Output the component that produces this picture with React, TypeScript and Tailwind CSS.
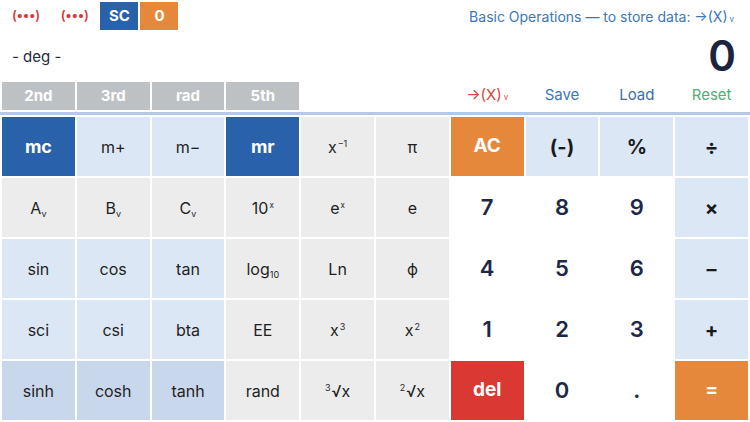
import React from 'react';

type Key = {
  label: React.ReactNode;
  tone: 'dark' | 'light' | 'gray' | 'deep' | 'white' | 'orange' | 'red' | 'op';
};

const TONES: Record<Key['tone'], string> = {
  dark: 'bg-[#2a61ab] text-white font-bold text-[18px]',
  light: 'bg-[#dce7f5] text-[#1f1f1f] text-[16px]',
  gray: 'bg-[#ececec] text-[#1f1f1f] text-[16px]',
  deep: 'bg-[#c9d7ed] text-[#1f1f1f] text-[16px]',
  white: 'bg-white text-[#1c2846] font-semibold text-[22px]',
  orange: 'bg-[#e5883b] text-white font-bold text-[19px]',
  red: 'bg-[#d93833] text-white font-bold text-[19px]',
  op: 'bg-[#dce7f5] text-[#1a1a1a] font-bold text-[20px]',
};

const Sub = ({ base, sub }: { base: string; sub: string }) => (
  <span>
    {base}
    <span className="text-[9px] inline-block translate-y-[3px]">{sub}</span>
  </span>
);

const Sup = ({ base, sup, size = 'text-[9px]' }: { base: string; sup: string; size?: string }) => (
  <span>
    {base}
    <span className={`${size} inline-block -translate-y-[6px] ml-[1px]`}>{sup}</span>
  </span>
);

const Root = ({ n }: { n: string }) => (
  <span>
    <span className="text-[9px] inline-block -translate-y-[6px] mr-[1px]">{n}</span>√x
  </span>
);

const KEYS: Key[] = [
  { label: 'mc', tone: 'dark' },
  { label: 'm+', tone: 'light' },
  { label: 'm−', tone: 'light' },
  { label: 'mr', tone: 'dark' },
  { label: <Sup base="x" sup="−1" />, tone: 'gray' },
  { label: 'π', tone: 'gray' },
  { label: 'AC', tone: 'orange' },
  { label: '(-)', tone: 'op' },
  { label: '%', tone: 'op' },
  { label: '÷', tone: 'op' },

  { label: <Sub base="A" sub="v" />, tone: 'gray' },
  { label: <Sub base="B" sub="v" />, tone: 'gray' },
  { label: <Sub base="C" sub="v" />, tone: 'gray' },
  { label: <Sup base="10" sup="x" size="text-[8px]" />, tone: 'gray' },
  { label: <Sup base="e" sup="x" size="text-[8px]" />, tone: 'gray' },
  { label: 'e', tone: 'gray' },
  { label: '7', tone: 'white' },
  { label: '8', tone: 'white' },
  { label: '9', tone: 'white' },
  { label: '×', tone: 'op' },

  { label: 'sin', tone: 'light' },
  { label: 'cos', tone: 'light' },
  { label: 'tan', tone: 'light' },
  { label: <Sub base="log" sub="10" />, tone: 'gray' },
  { label: 'Ln', tone: 'gray' },
  { label: 'ϕ', tone: 'gray' },
  { label: '4', tone: 'white' },
  { label: '5', tone: 'white' },
  { label: '6', tone: 'white' },
  { label: '–', tone: 'op' },

  { label: 'sci', tone: 'light' },
  { label: 'csi', tone: 'light' },
  { label: 'bta', tone: 'light' },
  { label: 'EE', tone: 'gray' },
  { label: <Sup base="x" sup="3" />, tone: 'gray' },
  { label: <Sup base="x" sup="2" />, tone: 'gray' },
  { label: '1', tone: 'white' },
  { label: '2', tone: 'white' },
  { label: '3', tone: 'white' },
  { label: '+', tone: 'op' },

  { label: 'sinh', tone: 'deep' },
  { label: 'cosh', tone: 'deep' },
  { label: 'tanh', tone: 'deep' },
  { label: 'rand', tone: 'gray' },
  { label: <Root n="3" />, tone: 'gray' },
  { label: <Root n="2" />, tone: 'gray' },
  { label: 'del', tone: 'red' },
  { label: '0', tone: 'white' },
  { label: '.', tone: 'white' },
  { label: '=', tone: 'orange' },
];

const TABS = ['2nd', '3rd', 'rad', '5th'];

export default function App() {
  return (
    <div
      className="w-[750px] h-[422px] overflow-hidden bg-white"
      style={{ fontFamily: 'Inter, "Liberation Sans", sans-serif' }}
    >
      {/* header */}
      <div className="h-[82px] flex flex-col">
        <div className="flex items-center h-[28px] mt-[2px] pl-[12px] pr-[16px]">
          <span className="text-[#d43c3c] text-[13px] font-semibold tracking-tight">(•••)</span>
          <span className="ml-[21px] text-[#d43c3c] text-[13px] font-semibold tracking-tight">(•••)</span>
          <div className="ml-[12px] w-[38px] h-[28px] bg-[#2a61ab] text-white font-bold text-[15px] flex items-center justify-center">
            SC
          </div>
          <div className="ml-[2px] w-[38px] h-[28px] bg-[#e5883b] text-white font-bold text-[15px] flex items-center justify-center">
            0
          </div>
          <div className="ml-auto text-[#3a78bb] text-[14px]">
            Basic Operations — to store data: →(X)<span className="text-[8px] ml-[2px]">v</span>
          </div>
        </div>
        <div className="flex items-center justify-between pl-[12px] pr-[14px] mt-[5px]">
          <span className="text-[#1f2a44] text-[15px] mt-[2px]">- deg -</span>
          <span className="text-[#1b2540] text-[42px] font-semibold leading-none">0</span>
        </div>
      </div>

      {/* tab row */}
      <div className="grid grid-cols-10 gap-[2px] px-[2px] h-[28px]">
        {TABS.map((t) => (
          <div key={t} className="bg-[#bec1c4] text-white font-bold text-[15px] flex items-center justify-center">
            {t}
          </div>
        ))}
        <div className="col-span-2" />
        <div className="flex items-center justify-center text-[#d9433a] text-[15px] -mt-[2px]">
          →(X)<span className="text-[8px] ml-[2px] mt-[4px]">v</span>
        </div>
        <div className="flex items-center justify-center text-[#3a78bb] text-[15px] -mt-[2px]">Save</div>
        <div className="flex items-center justify-center text-[#3a6ea8] text-[15px] -mt-[2px]">Load</div>
        <div className="flex items-center justify-center text-[#4fae74] text-[15px] -mt-[2px]">Reset</div>
      </div>
      <div className="h-[3px] mt-[2px] bg-[#b6c8e7]" />

      {/* keypad */}
      <div className="grid grid-cols-10 grid-rows-[repeat(5,59px)] gap-[2px] px-[2px] mt-[2px]">
        {KEYS.map((k, i) => (
          <div key={i} className={`flex items-center justify-center ${TONES[k.tone]}`}>
            {k.label}
          </div>
        ))}
      </div>
    </div>
  );
}
